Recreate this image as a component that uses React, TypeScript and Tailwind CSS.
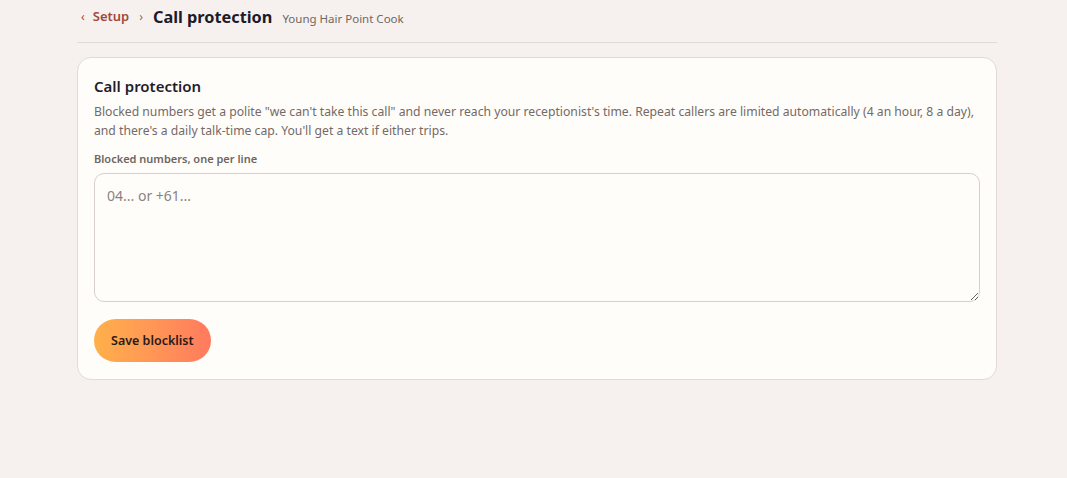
export default function App() {
  return (
    <div className="min-h-[478px] bg-[#f6f1ee] font-['Noto_Sans','Open_Sans',sans-serif] text-[#221d2b]">
      <div className="ml-[77px] w-[920px]">
        <div className="flex items-center gap-[10px] pt-[5px] pb-[13px] border-b border-[#e1d9d4]">
          <a className="flex items-center gap-[8px] pl-[4px] text-[13px] font-semibold text-[#a2473c]">
            <span className="text-[12px] font-normal">‹</span>
            <span>Setup</span>
          </a>
          <span className="text-[12px] text-[#7b6e6a]">›</span>
          <h1 className="text-[16.3px] font-bold text-[#1d1a2a]">Call protection</h1>
          <span className="text-[11.5px] pt-[2px] text-[#6f6763]">Young Hair Point Cook</span>
        </div>

        <div className="mt-[14px] rounded-[14px] border border-[#e2dad5] bg-[#fffdfa] px-[16px] pt-[17px] pb-[17px]">
          <h2 className="text-[15px] font-semibold leading-[22px] text-[#221d2b]">Call protection</h2>
          <p className="mt-[5px] text-[12.2px] leading-[19px] text-[#736a66]">
            Blocked numbers get a polite "we can't take this call" and never reach your receptionist's time. Repeat callers are limited automatically (4 an hour, 8 a day), and there's a daily talk-time cap. You'll get a text if either trips.
          </p>
          <label className="mt-[11px] block text-[11px] font-semibold leading-[16px] text-[#6e6561]">
            Blocked numbers, one per line
          </label>
          <textarea
            placeholder="04... or +61..."
            className="mt-[6px] block h-[129px] w-full rounded-[10px] border border-[#d8cfca] bg-[#fffdfa] px-[12px] py-[12px] text-[14px] leading-[20px] text-[#221d2b] placeholder:text-[#8a8380] outline-none"
          />
          <button className="mt-[17px] h-[43px] rounded-full bg-gradient-to-r from-[#ffb04a] to-[#ff7a5e] px-[17px] text-[12.5px] font-semibold text-[#2a1a16]">
            Save blocklist
          </button>
        </div>
      </div>
    </div>
  );
}
